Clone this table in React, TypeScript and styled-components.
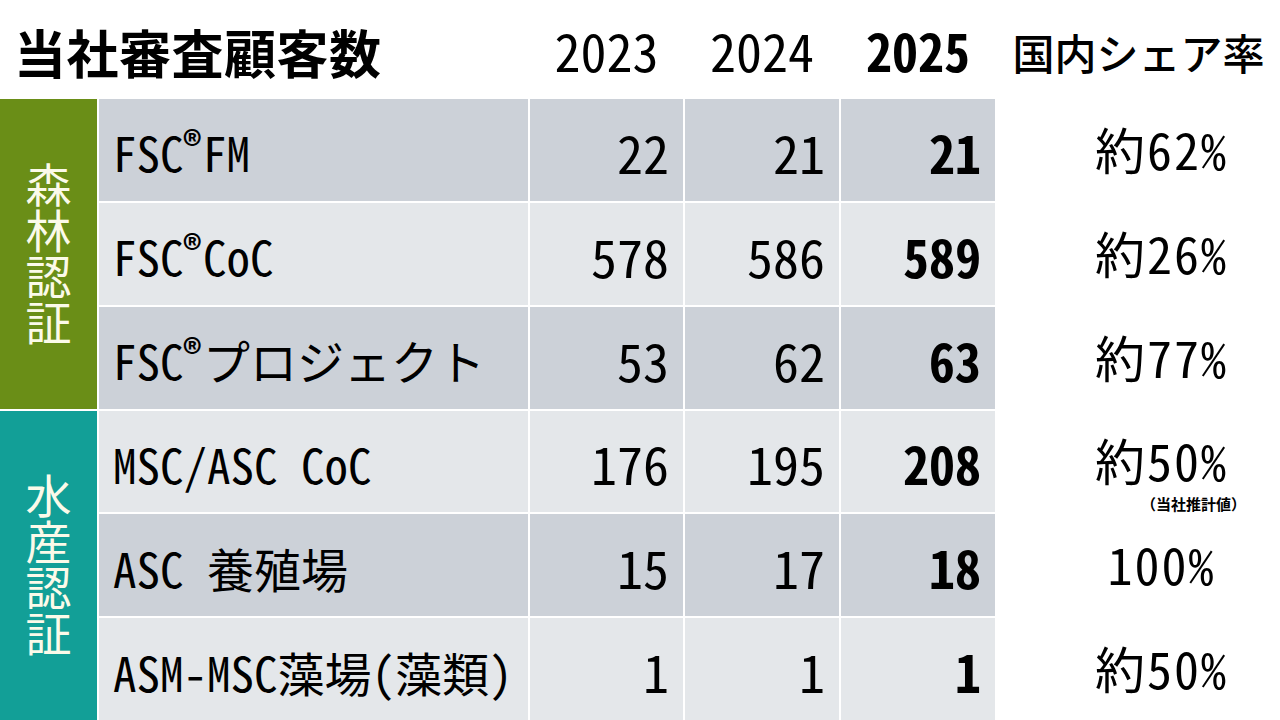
import React from "react";
import styled, { createGlobalStyle } from "styled-components";

const Global = createGlobalStyle`
  html, body { margin: 0; padding: 0; background: #ffffff; }
  body { font-family: "Noto Sans CJK JP", "Noto Sans", sans-serif; color: #111; }
`;

const MONO = `"Noto Sans Mono CJK JP", "Noto Sans CJK JP", "DejaVu Sans Mono", monospace`;
const CJK = `"Noto Sans CJK JP", "Noto Sans", sans-serif`;

const Grid = styled.div`
  display: grid;
  grid-template-columns: 97px 429px 153px 154px 154px 1fr;
  grid-template-rows: 97px repeat(6, 1fr);
  gap: 2px;
  width: 1280px;
  height: 720px;
  background: #ffffff;
  overflow: hidden;
`;

const Title = styled.div`
  grid-column: 1 / 3;
  display: flex;
  align-items: center;
  padding: 6px 0 0 14px;
  font-family: ${CJK};
  font-weight: 700;
  font-size: 52px;
  letter-spacing: 0.5px;
  color: #000;
`;

const YearHead = styled.div<{ $bold?: boolean }>`
  display: flex;
  align-items: center;
  justify-content: center;
  padding-top: 2px;
  font-family: ${MONO};
  font-weight: ${(p) => (p.$bold ? 700 : 400)};
  font-size: 52px;
  color: #000;
`;

const ShareHead = styled.div`
  display: flex;
  align-items: center;
  justify-content: center;
  padding-top: 6px;
  font-family: ${CJK};
  font-weight: 500;
  font-size: 42px;
  color: #000;
`;

const Category = styled.div<{ $color: string; $row: number }>`
  grid-row: ${(p) => p.$row} / span 3;
  grid-column: 1;
  background: ${(p) => p.$color};
  display: flex;
  align-items: center;
  justify-content: center;
`;

const CategoryText = styled.span`
  writing-mode: vertical-rl;
  text-orientation: upright;
  font-family: ${CJK};
  font-size: 46px;
  line-height: 1;
  color: #fbfae9;
`;

const NameCell = styled.div<{ $dark: boolean }>`
  background: ${(p) => (p.$dark ? "#ccd1d8" : "#e4e7ea")};
  display: flex;
  align-items: center;
  padding: 4px 0 0 14px;
  font-family: ${MONO};
  font-size: 47px;
  line-height: 1;
  color: #000;
  white-space: nowrap;
`;

const Reg = styled.span`
  font-family: ${CJK};
  font-size: 38px;
  font-weight: 700;
  line-height: 1;
  position: relative;
  top: -9px;
  margin: 0 1px 0 -1px;
`;

const NumCell = styled.div<{ $dark: boolean; $bold?: boolean }>`
  background: ${(p) => (p.$dark ? "#ccd1d8" : "#e4e7ea")};
  display: flex;
  align-items: center;
  justify-content: flex-end;
  padding: 4px 14px 0 0;
  font-family: ${MONO};
  font-weight: ${(p) => (p.$bold ? 700 : 400)};
  font-size: 52px;
  line-height: 1;
  color: #000;
`;

const ShareCell = styled.div`
  position: relative;
  display: flex;
  align-items: center;
  justify-content: center;
  padding: 0 0 4px 46px;
  font-family: ${MONO};
  font-size: 50px;
  line-height: 1;
  letter-spacing: 2px;
  color: #000;
`;

const Note = styled.span`
  position: absolute;
  right: 34px;
  bottom: 1px;
  font-family: ${CJK};
  font-weight: 700;
  font-size: 15px;
  letter-spacing: 0;
  line-height: 1;
  color: #000;
`;

type Row = {
  name: React.ReactNode;
  v: [string, string, string];
  share: string;
  note?: string;
};

const rows: Row[] = [
  { name: <>FSC<Reg>®</Reg>FM</>, v: ["22", "21", "21"], share: "約62%" },
  { name: <>FSC<Reg>®</Reg>CoC</>, v: ["578", "586", "589"], share: "約26%" },
  { name: <>FSC<Reg>®</Reg>プロジェクト</>, v: ["53", "62", "63"], share: "約77%" },
  { name: "MSC/ASC CoC", v: ["176", "195", "208"], share: "約50%", note: "（当社推計値）" },
  { name: "ASC 養殖場", v: ["15", "17", "18"], share: "100%" },
  { name: "ASM-MSC藻場(藻類)", v: ["1", "1", "1"], share: "約50%" },
];

export default function App() {
  return (
    <>
      <Global />
      <Grid>
        <Title>当社審査顧客数</Title>
        <YearHead>2023</YearHead>
        <YearHead>2024</YearHead>
        <YearHead $bold>2025</YearHead>
        <ShareHead>国内シェア率</ShareHead>

        <Category $color="#6a8e17" $row={2}>
          <CategoryText>森林認証</CategoryText>
        </Category>
        <Category $color="#129f97" $row={5}>
          <CategoryText>水産認証</CategoryText>
        </Category>

        {rows.map((r, i) => {
          const dark = i % 2 === 0;
          return (
            <React.Fragment key={i}>
              <NameCell $dark={dark} style={{ gridRow: i + 2, gridColumn: 2 }}>
                {r.name}
              </NameCell>
              <NumCell $dark={dark} style={{ gridRow: i + 2, gridColumn: 3 }}>{r.v[0]}</NumCell>
              <NumCell $dark={dark} style={{ gridRow: i + 2, gridColumn: 4 }}>{r.v[1]}</NumCell>
              <NumCell $dark={dark} $bold style={{ gridRow: i + 2, gridColumn: 5 }}>{r.v[2]}</NumCell>
              <ShareCell style={{ gridRow: i + 2, gridColumn: 6 }}>
                {r.share}
                {r.note && <Note>{r.note}</Note>}
              </ShareCell>
            </React.Fragment>
          );
        })}
      </Grid>
    </>
  );
}
